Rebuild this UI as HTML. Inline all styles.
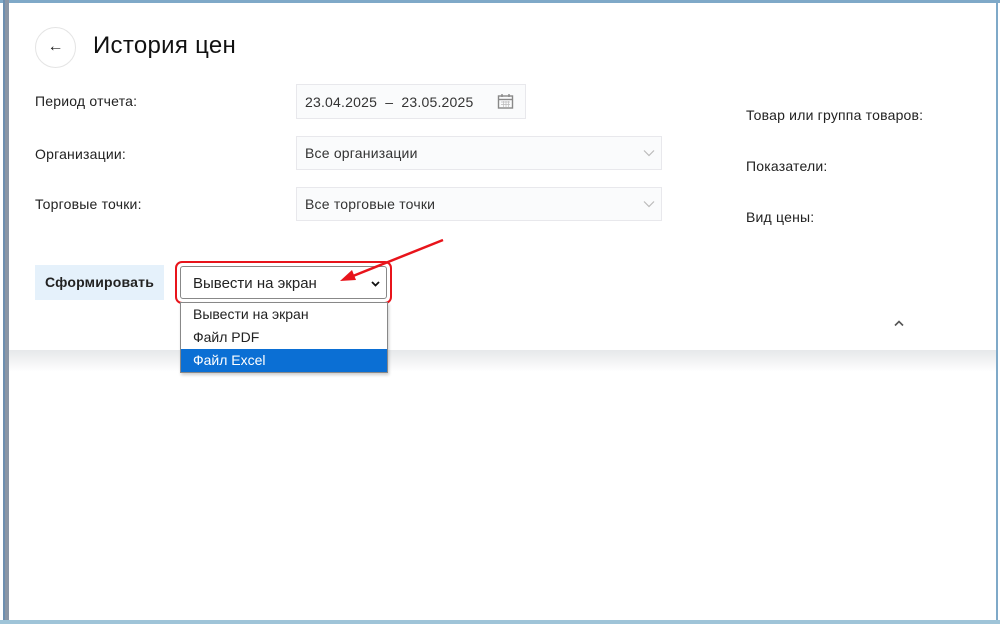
<!DOCTYPE html>
<html><head><meta charset="utf-8"><style>
*{margin:0;padding:0;box-sizing:border-box}
body{width:1000px;height:624px;background:#fff;font-family:"Liberation Sans","Noto Sans CJK SC",sans-serif;position:relative;overflow:hidden;color:#222}
.a{position:absolute}
.lbl{font-size:14px;color:#222;letter-spacing:.2px}
.inp{border:1px solid #e8e8ec;background:#fafbfc;font-size:14px;color:#333;padding-left:8px;display:flex;align-items:center;letter-spacing:.2px}
</style></head><body>
<div class="a" style="left:0;top:0;width:1000px;height:3px;background:#7fa9c8"></div>
<div class="a" style="left:3px;top:0;width:6px;height:624px;background:#8a96a6"></div>
<div class="a" style="left:3px;top:0;width:2px;height:624px;background:#6d8fb0"></div>
<div class="a" style="left:996px;top:0;width:2px;height:624px;background:#7fa9c8"></div>
<div class="a" style="left:0;top:620px;width:1000px;height:4px;background:#9fc4d8"></div>
<div class="a" style="left:9px;top:350px;width:987px;height:22px;background:linear-gradient(#e6e8ea,#fff)"></div>
<div class="a" style="left:35px;top:27px;width:41px;height:41px;border:1px solid #e4e4e4;border-radius:50%;text-align:center;line-height:38px;font-size:16px">←</div>
<div class="a" style="left:93px;top:32px;font-size:24px;color:#111;letter-spacing:.3px">История цен</div>
<div class="a lbl" style="left:35px;top:93px">Период отчета:</div>
<div class="a lbl" style="left:35px;top:146px">Организации:</div>
<div class="a lbl" style="left:35px;top:196px">Торговые точки:</div>
<div class="a inp" style="left:296px;top:84px;width:230px;height:35px">23.04.2025 &nbsp;– &nbsp;23.05.2025
<svg style="position:absolute;left:200px;top:8px" width="17" height="17" viewBox="0 0 17 17"><rect x="1.5" y="3" width="14" height="12" fill="none" stroke="#888" stroke-width="1.4"/><line x1="1.5" y1="6.5" x2="15.5" y2="6.5" stroke="#888" stroke-width="1.4"/><line x1="5" y1="1" x2="5" y2="4" stroke="#888" stroke-width="1.4"/><line x1="12" y1="1" x2="12" y2="4" stroke="#888" stroke-width="1.4"/><path d="M4 9h9M4 11.5h9M6.5 8v6M9 8v6M11.5 8v6" stroke="#bbb" stroke-width=".7"/></svg></div>
<div class="a inp" style="left:296px;top:136px;width:366px;height:34px">Все организации<svg style="position:absolute;right:6px;top:12px" width="12" height="8"><path d="M1 1.5l5 5 5-5" fill="none" stroke="#bbb" stroke-width="1.2"/></svg></div>
<div class="a inp" style="left:296px;top:187px;width:366px;height:34px">Все торговые точки<svg style="position:absolute;right:6px;top:12px" width="12" height="8"><path d="M1 1.5l5 5 5-5" fill="none" stroke="#bbb" stroke-width="1.2"/></svg></div>
<div class="a lbl" style="left:746px;top:107px">Товар или группа товаров:</div>
<div class="a lbl" style="left:746px;top:158px">Показатели:</div>
<div class="a lbl" style="left:746px;top:209px">Вид цены:</div>
<div class="a" style="left:35px;top:265px;width:129px;height:35px;background:#e5f1fb;font-size:14px;font-weight:bold;text-align:center;line-height:35px;color:#222;letter-spacing:.2px">Сформировать</div>
<div class="a" style="left:175px;top:261px;width:217px;height:43px;border:2.5px solid #e8141b;border-radius:7px"></div>
<div class="a" style="left:180px;top:266px;width:207px;height:33px;border:1px solid #888;border-radius:3px;background:#fff;font-size:15px;padding-left:12px;line-height:33px">Вывести на экран<svg style="position:absolute;right:6px;top:14px" width="9" height="6"><path d="M1 1l3.5 3.5L8 1" fill="none" stroke="#111" stroke-width="1.8"/></svg></div>
<div class="a" style="left:180px;top:302px;width:208px;height:71px;border:1px solid #888;background:#fff;font-size:14px;box-shadow:1px 2px 3px rgba(0,0,0,.2)">
<div style="height:22px;line-height:22px;padding-left:12px">Вывести на экран</div>
<div style="height:24px;line-height:24px;padding-left:12px">Файл PDF</div>
<div style="height:23px;line-height:23px;padding-left:12px;background:#0b6fd4;color:#fff">Файл Excel</div></div>
<svg class="a" style="left:330px;top:236px" width="120" height="50"><line x1="113" y1="4" x2="18" y2="42" stroke="#e8141b" stroke-width="2.5"/><path d="M10 45 L22 34 L26 44 Z" fill="#e8141b"/></svg>
<svg class="a" style="left:894px;top:320px" width="10" height="7"><path d="M1 5.5l4-4 4 4" fill="none" stroke="#555" stroke-width="1.6"/></svg>
</body></html>
